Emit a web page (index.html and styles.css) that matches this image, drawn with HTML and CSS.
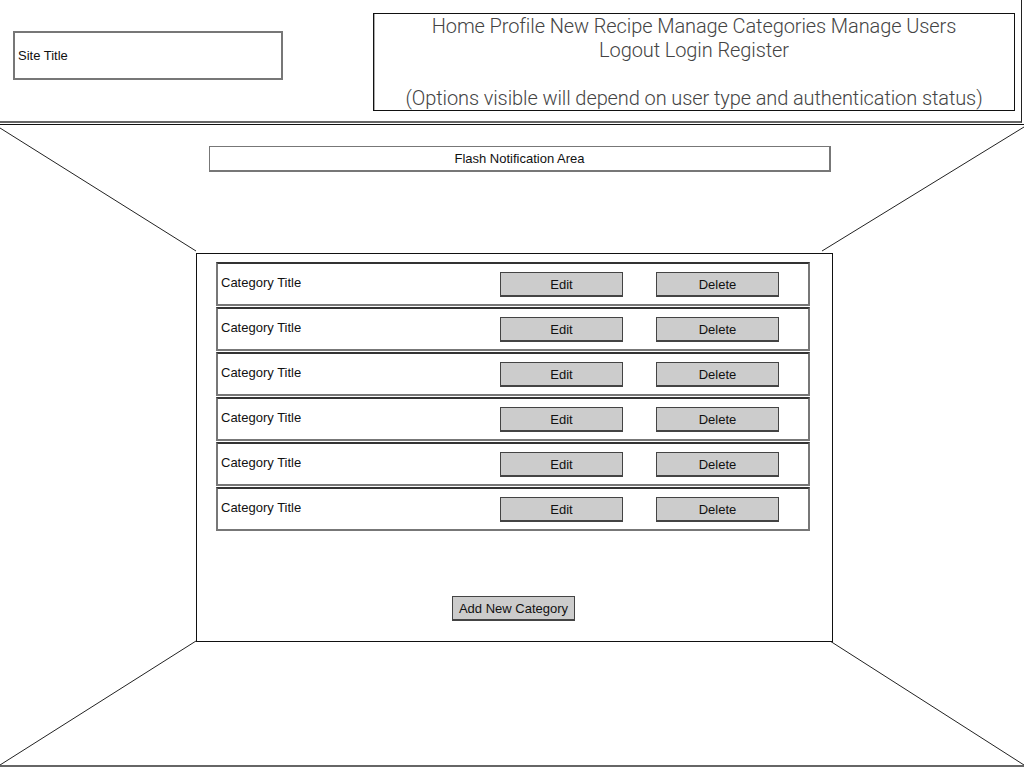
FILE: index.html
```html
<!DOCTYPE html>
<html lang="en">
<head>
    <meta charset="UTF-8">
    <meta name="viewport" content="width=device-width, initial-scale=1.0">
    <title>Manage Categories</title>
    <link rel="stylesheet" href="styles.css">
</head>
<body>
    <div class="header">
        <div class="site-title">Site Title</div>
        <div class="nav">
            Home Profile New Recipe Manage Categories Manage Users<br>
            Logout Login Register<br>
            <br>
            (Options visible will depend on user type and authentication status)
        </div>
    </div>

    <div class="main">
        <svg class="frame-lines" width="1024" height="640" viewBox="0 0 1024 640">
            <line x1="0" y1="3" x2="196" y2="126"></line>
            <line x1="1024" y1="2" x2="822" y2="126"></line>
            <line x1="0" y1="640" x2="196" y2="516"></line>
            <line x1="1024" y1="640" x2="830" y2="516"></line>
        </svg>

        <div class="flash">Flash Notification Area</div>

        <div class="panel">
            <div class="category-row">
                <div class="category-title">Category Title</div>
                <div class="btn">Edit</div>
                <div class="btn">Delete</div>
            </div>
            <div class="category-row">
                <div class="category-title">Category Title</div>
                <div class="btn">Edit</div>
                <div class="btn">Delete</div>
            </div>
            <div class="category-row">
                <div class="category-title">Category Title</div>
                <div class="btn">Edit</div>
                <div class="btn">Delete</div>
            </div>
            <div class="category-row">
                <div class="category-title">Category Title</div>
                <div class="btn">Edit</div>
                <div class="btn">Delete</div>
            </div>
            <div class="category-row">
                <div class="category-title">Category Title</div>
                <div class="btn">Edit</div>
                <div class="btn">Delete</div>
            </div>
            <div class="category-row">
                <div class="category-title">Category Title</div>
                <div class="btn">Edit</div>
                <div class="btn">Delete</div>
            </div>

            <div class="btn add-btn">Add New Category</div>
        </div>
    </div>
</body>
</html>
```

FILE: styles.css
```css
body {
    margin: 0;
    font-family: "Liberation Sans", Arial, sans-serif;
    font-size: 13px;
    color: #111;
    background: #fff;
}
.header {
    display: flex;
    align-items: flex-start;
    width: 1021px;
    height: 121px;
    border-right: 1px solid #222;
    border-bottom: 2px solid #666;
}
.site-title {
    margin-top: 31px;
    margin-left: 13px;
    width: 263px;
    height: 45px;
    border: 2px solid #777;
    display: flex;
    align-items: center;
    padding-left: 3px;
    box-sizing: content-box;
}
.nav {
    margin-top: 13px;
    margin-left: 90px;
    width: 640px;
    height: 96px;
    border: 1px solid #111;
    box-shadow: inset 1px 0 0 #aaa;
    font-family: Roboto, "Liberation Sans", sans-serif;
    font-weight: 300;
    font-size: 20px;
    line-height: 24px;
    letter-spacing: -0.1px;
    text-align: center;
    color: #444;
    box-sizing: content-box;
}
.main {
    position: relative;
    margin-top: 1px;
    height: 640px;
    border-top: 1px solid #111;
    border-bottom: 2px solid #666;
    overflow: hidden;
}
.frame-lines {
    position: absolute;
    left: 0;
    top: 0;
}
.frame-lines line {
    stroke: #222;
    stroke-width: 1;
}
.flash {
    position: relative;
    margin-top: 21px;
    margin-left: 209px;
    width: 619px;
    height: 23px;
    border: 1px solid #777;
    border-width: 1px 2px 2px 1px;
    line-height: 23px;
    text-align: center;
    box-sizing: content-box;
}
.panel {
    position: relative;
    margin-top: 81px;
    margin-left: 196px;
    width: 637px;
    height: 389px;
    box-sizing: border-box;
    border: 1px solid #111;
    background: #fff;
    padding: 8px 0 0 19px;
    display: flex;
    flex-direction: column;
}
.category-row {
    display: flex;
    align-items: center;
    width: 594px;
    height: 44px;
    box-sizing: border-box;
    border: 2px solid #777;
    border-top-color: #333;
    margin-bottom: 1px;
    padding-right: 29px;
    gap: 33px;
}
.category-title {
    flex: 1;
    padding-left: 3px;
    margin-top: -3px;
}
.btn {
    width: 123px;
    height: 25px;
    box-sizing: border-box;
    border: 1px solid #444;
    border-width: 1px 1px 2px 1px;
    background: #ccc;
    text-align: center;
    line-height: 24px;
}
.add-btn {
    align-self: flex-start;
    margin-top: 64px;
    margin-left: 236px;
}
```
